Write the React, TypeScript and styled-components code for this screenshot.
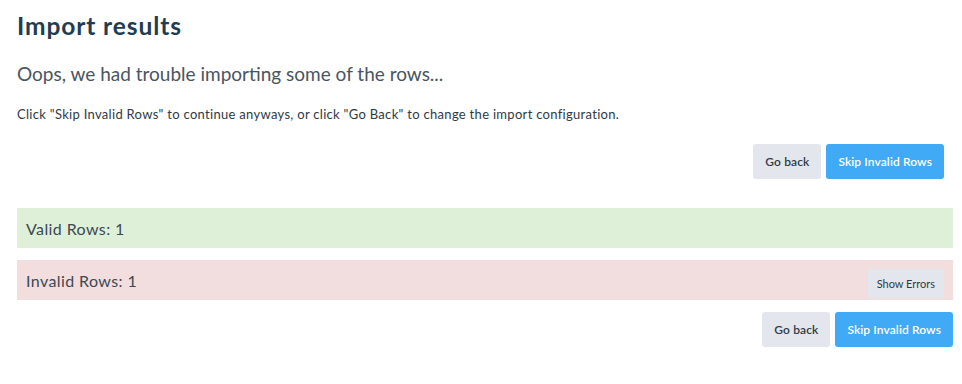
import React from 'react';
import styled, { createGlobalStyle } from 'styled-components';

const GlobalStyle = createGlobalStyle`
  html, body {
    margin: 0;
    padding: 0;
    background: #fff;
  }
  body {
    font-family: 'Lato', 'Noto Sans', sans-serif;
    color: #3d4852;
  }
`;

const Page = styled.div`
  padding: 10px 9px 0 17px;
`;

const Title = styled.h1`
  margin: 0;
  font-size: 24.5px;
  line-height: 32px;
  font-weight: 700;
  letter-spacing: 0.9px;
  color: #233c52;
`;

const Subtitle = styled.h2`
  margin: 20px 0 0;
  font-size: 19px;
  line-height: 24px;
  font-weight: 400;
  color: #4a5560;
`;

const Text = styled.p`
  margin: 19px 0 0;
  font-size: 13px;
  line-height: 18px;
  letter-spacing: 0.3px;
  color: #2f3a44;
`;

const Actions = styled.div<{ inset?: boolean }>`
  display: flex;
  justify-content: flex-end;
  gap: 5px;
  margin-top: ${({ inset }) => (inset ? '21px' : '12px')};
  padding-right: ${({ inset }) => (inset ? '9px' : '0')};
`;

const Button = styled.button<{ primary?: boolean }>`
  height: 35px;
  padding: 0 12px;
  border: none;
  border-radius: 3px;
  font-family: inherit;
  font-size: 12px;
  font-weight: 600;
  letter-spacing: 0.1px;
  cursor: pointer;
  background: ${({ primary }) => (primary ? '#40aaf7' : '#e3e7ed')};
  color: ${({ primary }) => (primary ? '#fff' : '#2f3a44')};
`;

const SmallButton = styled(Button)`
  height: 29px;
  padding: 0 9px;
  font-size: 11px;
  font-weight: 400;
  letter-spacing: 0;
  align-self: flex-end;
  margin-bottom: 2px;
`;

const Summary = styled.div<{ tone: 'valid' | 'invalid' }>`
  display: flex;
  align-items: center;
  justify-content: space-between;
  height: 40px;
  padding: 0 9px;
  margin-top: ${({ tone }) => (tone === 'valid' ? '29px' : '12px')};
  background: ${({ tone }) => (tone === 'valid' ? '#dff0d8' : '#f2dede')};
  font-size: 16px;
  letter-spacing: 0.4px;
  color: #3d4852;
`;

const SummaryRow = styled(Summary)`
  align-items: stretch;
  > span {
    align-self: center;
  }
`;

export default function App() {
  return (
    <Page>
      <GlobalStyle />
      <Title>Import results</Title>
      <Subtitle>Oops, we had trouble importing some of the rows...</Subtitle>
      <Text>
        Click "Skip Invalid Rows" to continue anyways, or click "Go Back" to change the import
        configuration.
      </Text>
      <Actions inset>
        <Button>Go back</Button>
        <Button primary>Skip Invalid Rows</Button>
      </Actions>
      <Summary tone="valid">
        <span>Valid Rows: 1</span>
      </Summary>
      <SummaryRow tone="invalid">
        <span>Invalid Rows: 1</span>
        <SmallButton>Show Errors</SmallButton>
      </SummaryRow>
      <Actions>
        <Button>Go back</Button>
        <Button primary>Skip Invalid Rows</Button>
      </Actions>
    </Page>
  );
}
